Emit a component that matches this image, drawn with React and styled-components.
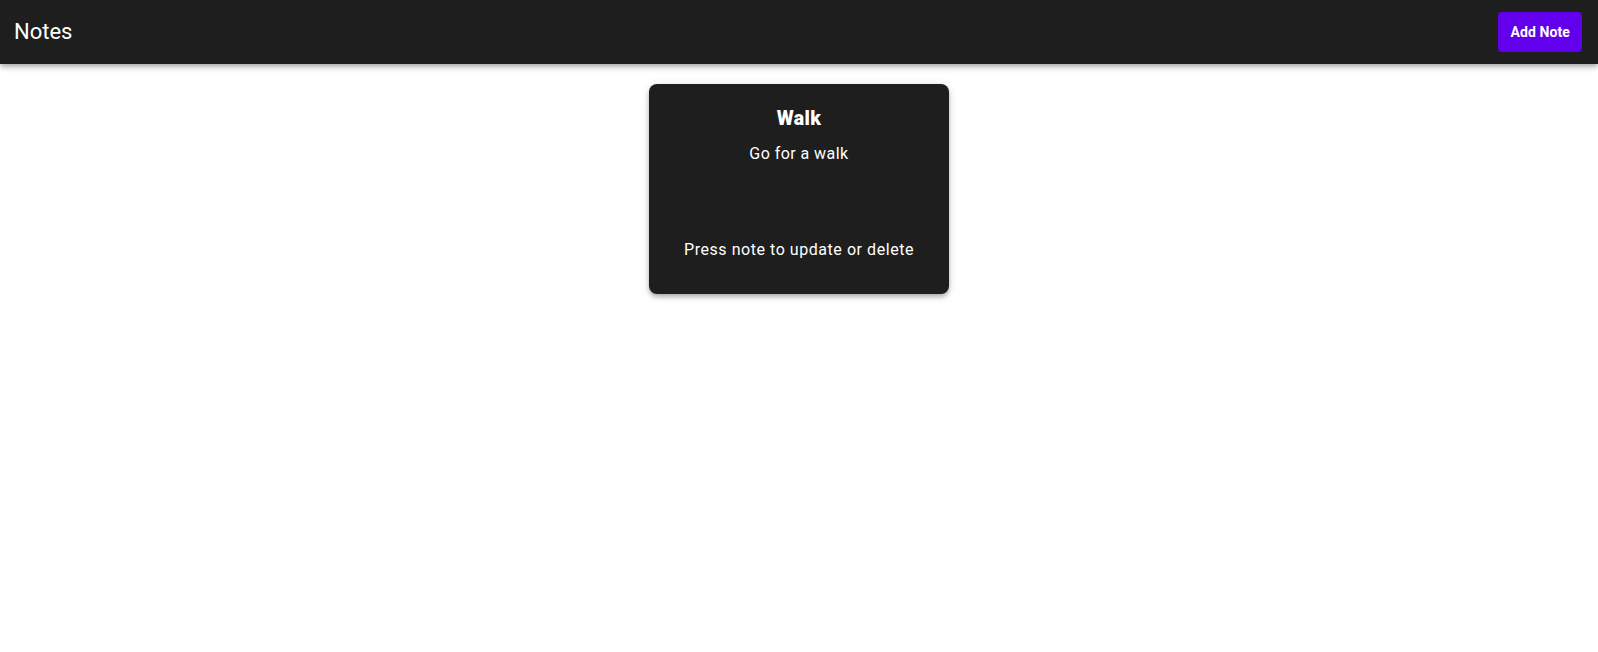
import React from 'react';
import styled, { createGlobalStyle } from 'styled-components';

const GlobalStyle = createGlobalStyle`
  body {
    margin: 0;
    background: #fff;
    font-family: Roboto, 'Liberation Sans', Arial, sans-serif;
  }
`;

const AppBar = styled.header`
  display: flex;
  align-items: center;
  justify-content: space-between;
  height: 64px;
  padding: 0 16px 0 14px;
  background: #1e1e1e;
  color: #fff;
  box-shadow: 0 2px 4px -1px rgba(0,0,0,0.2), 0 4px 5px 0 rgba(0,0,0,0.14), 0 1px 10px 0 rgba(0,0,0,0.12);
  position: relative;
  z-index: 1;
`;

const Brand = styled.h1`
  margin: 0;
  font-size: 22px;
  font-weight: 400;
  line-height: 1;
`;

const AddButton = styled.button`
  height: 40px;
  padding: 0 12px;
  border: none;
  border-radius: 4px;
  background: #6200ee;
  color: #fff;
  font-family: inherit;
  font-size: 14px;
  font-weight: 700;
  letter-spacing: 0.1px;
  cursor: pointer;
  &:hover { filter: brightness(1.1); }
`;

const Board = styled.main`
  display: flex;
  flex-wrap: wrap;
  justify-content: center;
  gap: 20px;
  padding: 20px 16px;
`;

const NoteCard = styled.div`
  width: 300px;
  box-sizing: border-box;
  padding: 21px 16px 32px;
  display: flex;
  flex-direction: column;
  align-items: center;
  text-align: center;
  background: #1e1e1e;
  color: #fff;
  border-radius: 8px;
  box-shadow: 0 2px 4px -1px rgba(0,0,0,0.2), 0 4px 5px 0 rgba(0,0,0,0.14), 0 1px 10px 0 rgba(0,0,0,0.12);
  cursor: pointer;
`;

const NoteTitle = styled.h2`
  margin: 0;
  font-size: 19.5px;
  font-weight: 900;
  line-height: 28px;
  letter-spacing: 0.4px;
`;

const NoteBody = styled.p`
  margin: 9px 0 0;
  font-size: 16px;
  line-height: 24px;
  letter-spacing: 0.45px;
`;

const NoteHint = styled(NoteBody)`
  margin-top: 72px;
  letter-spacing: 0.55px;
`;

const notes = [{ id: 1, title: 'Walk', body: 'Go for a walk' }];

const App = () => {
  return (
    <>
      <GlobalStyle />
      <AppBar>
        <Brand>Notes</Brand>
        <AddButton>Add Note</AddButton>
      </AppBar>
      <Board>
        {notes.map((note) => (
          <NoteCard key={note.id}>
            <NoteTitle>{note.title}</NoteTitle>
            <NoteBody>{note.body}</NoteBody>
            <NoteHint>Press note to update or delete</NoteHint>
          </NoteCard>
        ))}
      </Board>
    </>
  );
};

export default App;
